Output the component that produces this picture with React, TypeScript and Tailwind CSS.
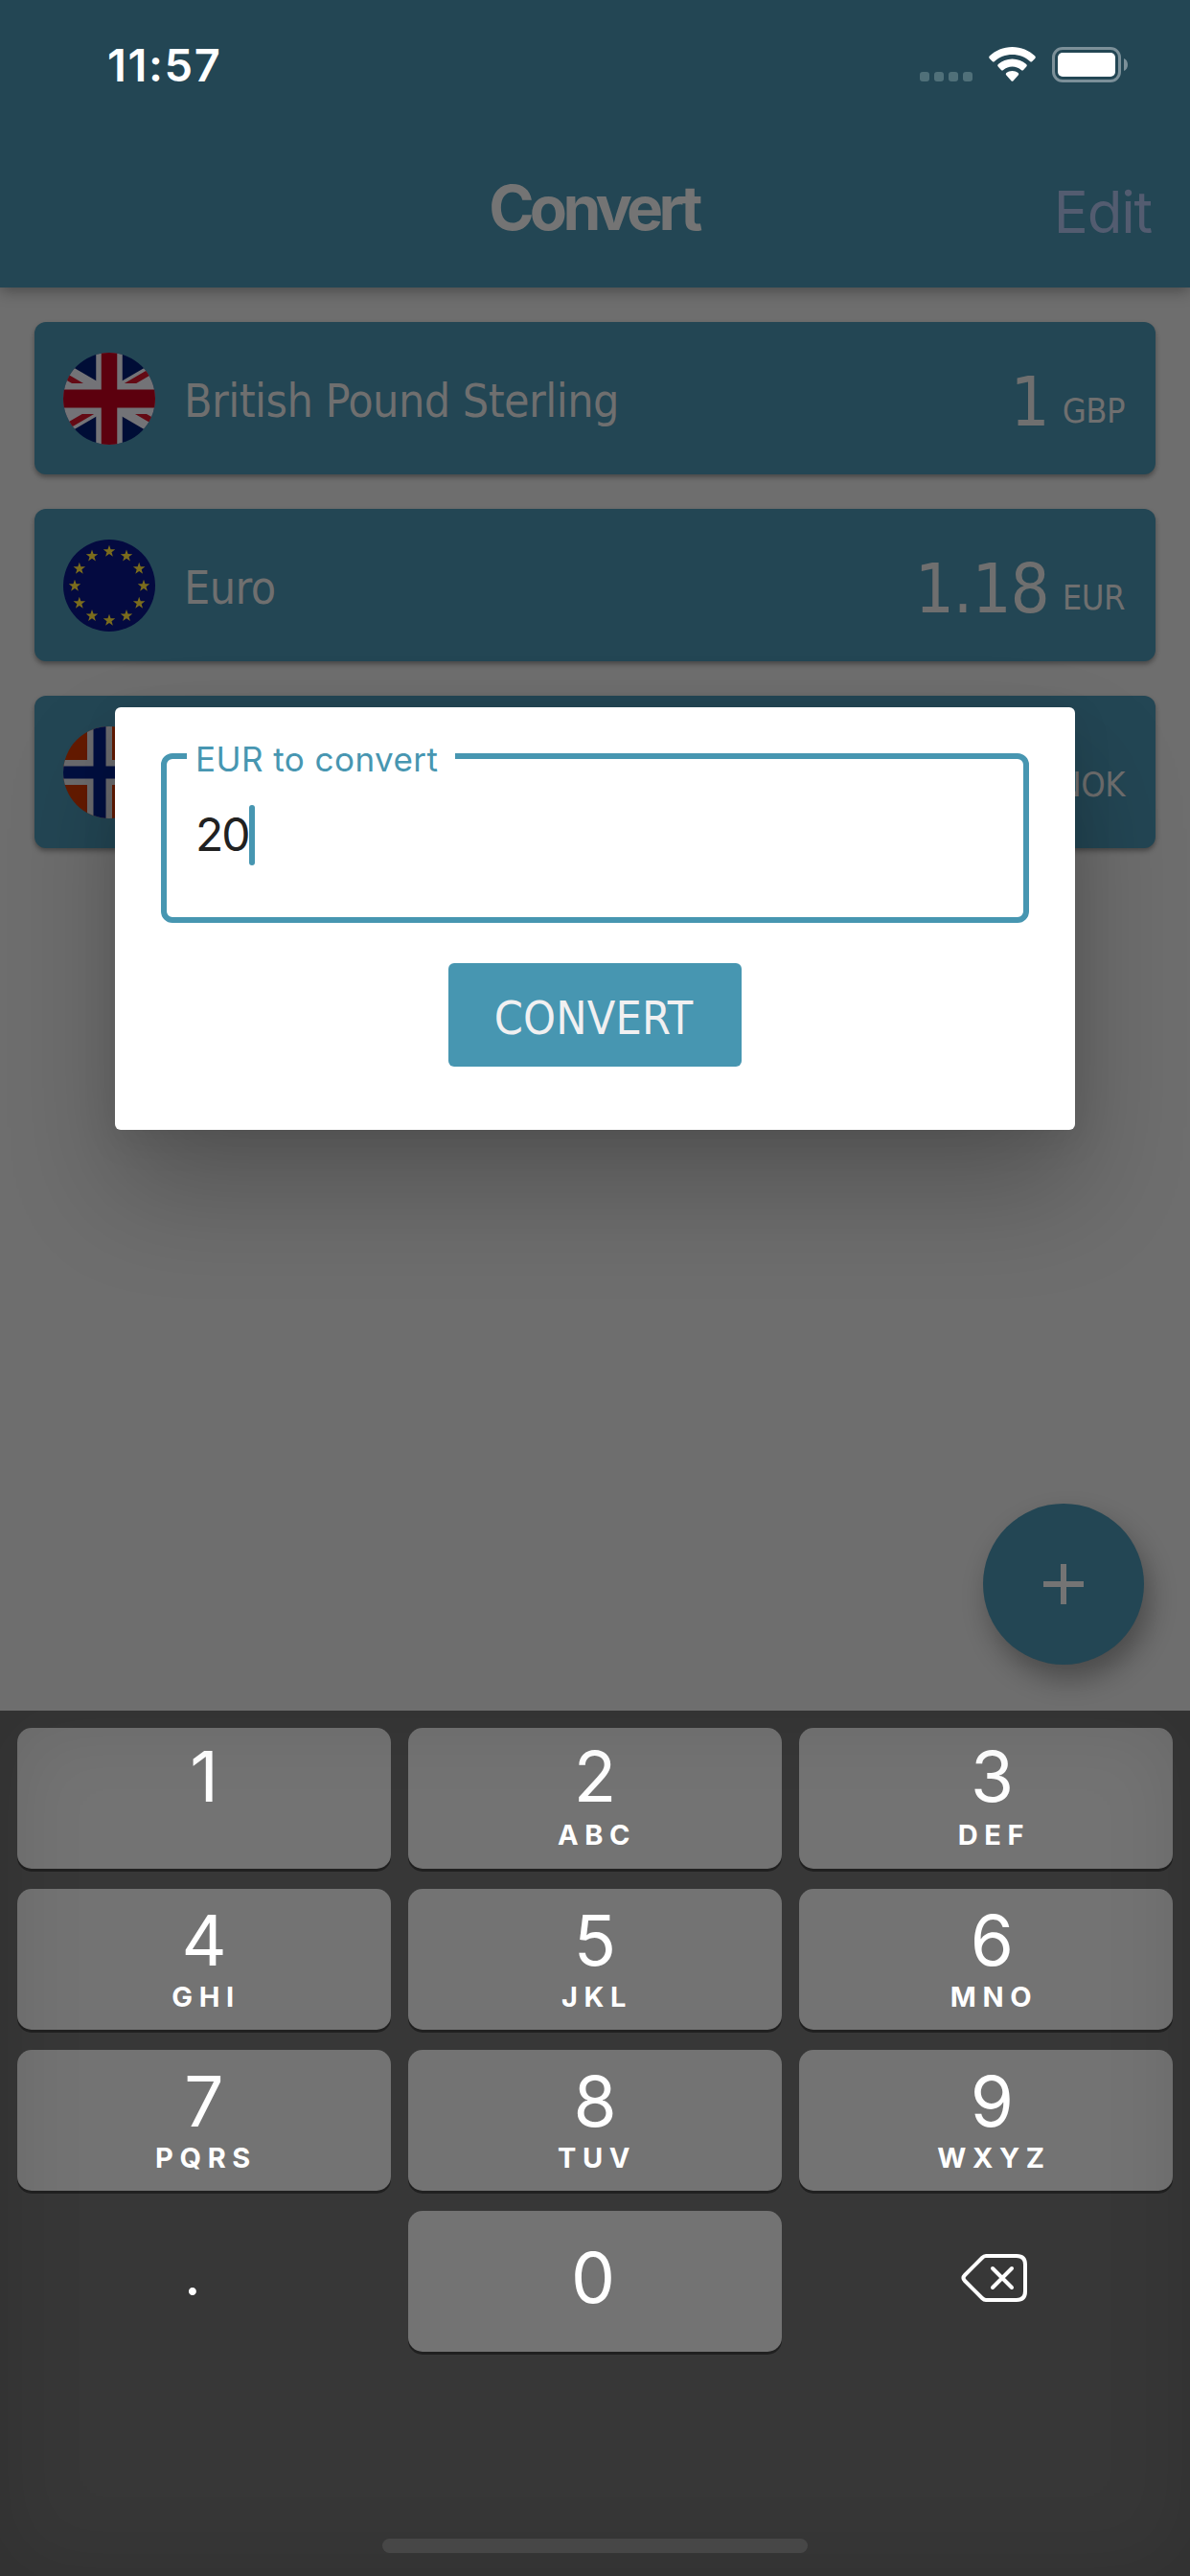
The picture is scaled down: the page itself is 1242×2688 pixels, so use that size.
import React from "react";

const inter = "font-['Inter','Liberation_Sans',sans-serif]";
const dejavu = "font-['DejaVu_Sans_Condensed','DejaVu_Sans',sans-serif] [font-stretch:condensed]";

function UkFlag() {
  return (
    <svg viewBox="0 0 96 96" className="size-24 rounded-full">
      <g transform="translate(48 48) scale(2.75 3.2) translate(-30 -15)">
        <path d="M0 0H60V30H0Z" fill="#000d36" />
        <path d="M0 0L60 30M60 0L0 30" stroke="#737377" strokeWidth="6" />
        <path d="M0 1L28 15M60 29L32 15M60 -1L32 13M0 31L28 17" stroke="#640a14" strokeWidth="2" />
        <path d="M30 0V30M0 15H60" stroke="#737377" strokeWidth="10" />
        <path d="M30 0V30M0 15H60" stroke="#5c000e" strokeWidth="6" />
      </g>
    </svg>
  );
}

function starPoints(cx: number, cy: number, r: number) {
  return Array.from({ length: 10 }, (_, i) => {
    const a = (Math.PI / 5) * i - Math.PI / 2;
    const q = i % 2 ? r * 0.4 : r;
    return `${(cx + q * Math.cos(a)).toFixed(2)},${(cy + q * Math.sin(a)).toFixed(2)}`;
  }).join(" ");
}

function EuFlag() {
  return (
    <svg viewBox="0 0 96 96" className="size-24 rounded-full">
      <path d="M0 0H96V96H0Z" fill="#040a40" />
      {Array.from({ length: 12 }, (_, i) => {
        const a = (Math.PI / 6) * i;
        return <polygon key={i} points={starPoints(48 + 36 * Math.sin(a), 48.4 - 36 * Math.cos(a), 6.6)} fill="#7b6c1d" />;
      })}
    </svg>
  );
}

function NorwayFlag() {
  return (
    <svg viewBox="0 0 96 96" className="size-24 rounded-full">
      <path d="M0 0H96V96H0Z" fill="#641a00" />
      <path d="M38 0V96M0 48H96" stroke="#6b6b6e" strokeWidth="26" />
      <path d="M38 0V96M0 48H96" stroke="#000f40" strokeWidth="13" />
    </svg>
  );
}

function Card({ flag, name, amount, code }: { flag: React.ReactNode; name?: string; amount?: string; code: string }) {
  return (
    <div className={`flex h-[159px] items-start rounded-xl bg-[#234654] pr-8 pl-[30px] text-[#6f6f6f] shadow-[0_3px_5px_rgba(0,0,0,0.35)] ${dejavu}`}>
      <div className="mt-8">{flag}</div>
      <div className="mt-[58px] ml-[30px] text-[48px] leading-[48px] tracking-[-0.55px] whitespace-pre">{name}</div>
      <div className="mt-[47px] ml-auto text-[72px] leading-[72px] tracking-[-1px]">{amount}</div>
      <div className="mt-[75px] ml-[14px] text-[36px] leading-[36px] tracking-[-0.5px]">{code}</div>
    </div>
  );
}

function StatusIcons() {
  return (
    <svg width="220" height="40" viewBox="960 48 220 40" fill="none">
      <g fill="#507079">
        <rect x="960" y="75" width="10" height="10" rx="3" />
        <rect x="975" y="75" width="10" height="10" rx="3" />
        <rect x="990" y="75" width="10" height="10" rx="3" />
        <rect x="1005" y="75" width="10" height="10" rx="3" />
      </g>
      <g fill="#fff">
        <path d="M1056.5 49C1047.300 49 1038.900 52.600 1032.700 58.500Q1031.600 59.700 1032.700 60.900L1035.700 64Q1036.900 65 1038 64C1042.900 59.500 1049.400 57 1056.500 57S1070.100 59.500 1075 64Q1076.100 65 1077.300 64L1080.300 60.900Q1081.400 59.700 1080.300 58.500C1074.100 52.600 1065.700 49 1056.500 49Z" />
        <path d="M1056.500 61.500C1050.900 61.500 1045.700 63.600 1041.800 67.100Q1040.500 68.400 1041.700 69.600L1044.900 72.900Q1046 73.900 1047.200 72.900C1049.700 70.800 1053 69.500 1056.500 69.500S1063.300 70.800 1065.800 72.900Q1067 73.900 1068.100 72.900L1071.300 69.600Q1072.500 68.400 1071.200 67.100C1067.300 63.600 1062.100 61.500 1056.500 61.500Z" />
        <path d="M1056.500 74C1054.100 74 1052 74.800 1050.300 76Q1049.100 77.200 1050.300 78.400L1055.400 84.200Q1056.500 85.300 1057.600 84.200L1062.700 78.400Q1063.900 77.200 1062.700 76C1061 74.800 1058.900 74 1056.500 74Z" />
        <rect x="1104" y="55" width="60" height="25" rx="5" />
      </g>
      <rect x="1099.500" y="50.500" width="69" height="34" rx="9.500" stroke="#7c9099" strokeWidth="3" />
      <path d="M1173 61C1178.300 63 1178.300 72 1173 74Z" fill="#7c9099" />
    </svg>
  );
}

const keys = [
  ["1", ""], ["2", "ABC"], ["3", "DEF"],
  ["4", "GHI"], ["5", "JKL"], ["6", "MNO"],
  ["7", "PQRS"], ["8", "TUV"], ["9", "WXYZ"],
];

const keyBase = "flex h-[147px] flex-col items-center";
const keyFace = "rounded-[15px] bg-[#737373] shadow-[0_3px_0_#202020]";

function Keyboard() {
  return (
    <div className={`relative h-[903px] bg-[#373737] px-[18px] pt-[18px] text-white ${inter}`}>
      <div className="grid grid-cols-3 gap-x-[18px] gap-y-[21px]">
        {keys.map(([digit, letters], i) => (
          <div key={digit} className={`${keyBase} ${keyFace} ${i < 3 ? "pt-[14px]" : "pt-[17px]"} ${i % 3 === 2 ? "pl-[13px]" : ""}`}>
            <div className="text-[73px] leading-[73px]">{digit}</div>
            <div className={`pl-[4px] text-[29px] leading-[30px] font-bold tracking-[6.6px] ${i < 3 ? "mt-[10px]" : "mt-[8px]"}`}>{letters}</div>
          </div>
        ))}
        <div className={`${keyBase} pt-[30px] pr-6`}>
          <div className="text-[60px] leading-[73px]">.</div>
        </div>
        <div className={`${keyBase} ${keyFace} pt-[33px] pr-1`}>
          <div className="text-[73px] leading-[73px]">0</div>
        </div>
        <div className={`${keyBase} pt-[44px] pl-[17px]`}>
          <svg width="70" height="52" viewBox="0 0 70 52" fill="none" stroke="#fff" strokeWidth="4" strokeLinecap="round" strokeLinejoin="round">
            <path d="M26 3H58Q67 3 67 12V40Q67 49 58 49H26Q24 49 22 47L4 29Q1 26 4 23L22 5Q24 3 26 3Z" />
            <path d="M33 16L53 36M53 16L33 36" />
          </svg>
        </div>
      </div>
      <div className="pointer-events-none absolute inset-0 shadow-[inset_0_0_90px_rgba(0,0,0,0.13)]" />
      <div className="absolute bottom-6 left-[399px] h-[15px] w-[444px] rounded-full bg-[#474747]" />
    </div>
  );
}

function ConvertDialog() {
  return (
    <div className="absolute top-[738px] left-[120px] flex h-[441px] w-[1002px] flex-col items-center rounded-md bg-white pt-12 shadow-[2px_62px_115px_rgba(0,0,0,0.23),2px_10px_40px_rgba(0,0,0,0.08)]">
      <div className={`relative h-[177px] w-[906px] rounded-xl border-6 border-[#4796b1] ${inter}`}>
        <div className="absolute -top-[17px] left-[21px] h-10 w-[280px] bg-white pl-[9px] text-[35px] leading-[35px] tracking-[0.45px] whitespace-nowrap text-[#4796b1]">
          EUR to convert
        </div>
        <div className="flex pt-12 pl-[30px]">
          <div className="mt-[7px] text-[48px] leading-[48px] tracking-[-2px] text-[#212121]">20</div>
          <div className="h-[63px] w-[6px] rounded-full bg-[#4796b1]" />
        </div>
      </div>
      <div className={`mt-[42px] h-[108px] w-[306px] rounded-md bg-[#4796b1] pt-[33px] pr-[3px] text-center text-[48px] leading-[48px] tracking-[0.2px] text-[#f1f0f1] ${dejavu}`}>
        CONVERT
      </div>
    </div>
  );
}

export default function App() {
  return (
    <div className="relative flex h-[2688px] w-[1242px] flex-col overflow-hidden bg-[#6e6e6e]">
      <header className={`relative h-[300px] bg-[#234654] shadow-[0_3px_15px_rgba(0,0,0,0.35)] ${inter}`}>
        <div className="flex h-[132px] justify-between pt-[44px] pr-[62px] pl-[112px] text-white">
          <div className="text-[47px] leading-[48px] font-semibold tracking-[1.6px]">11:57</div>
          <div className="mt-1">
            <StatusIcons />
          </div>
        </div>
        <div className="grid grid-cols-3 px-10">
          <div />
          <div className="pt-[53px] pr-[3px] text-center text-[64px] leading-[64px] font-bold tracking-[-4.7px] text-[#747474]">Convert</div>
          <div className="pt-[59px] text-right text-[60px] leading-[60px] tracking-[-1.2px] text-[#535c70]">Edit</div>
        </div>
      </header>
      <main className="flex flex-1 flex-col gap-9 p-9">
        <Card flag={<UkFlag />} name="British Pound Sterling" amount="1" code="GBP" />
        <Card flag={<EuFlag />} name="Euro" amount="1.18" code="EUR" />
        <Card flag={<NorwayFlag />} code="NOK" />
      </main>
      <div className="absolute top-[1569px] left-[1026px] flex size-[168px] items-center justify-center rounded-full bg-[#234654] shadow-[6px_15px_28px_rgba(0,0,0,0.32)]">
        <svg width="42" height="42" viewBox="0 0 42 42" stroke="#747474" strokeWidth="6">
          <path d="M21 0V42M0 21H42" />
        </svg>
      </div>
      <Keyboard />
      <ConvertDialog />
    </div>
  );
}
